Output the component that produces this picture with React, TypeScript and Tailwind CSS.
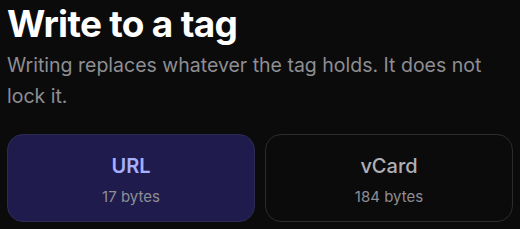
const options = [
  { label: 'URL', size: '17 bytes', active: true },
  { label: 'vCard', size: '184 bytes', active: false },
];

export default function App() {
  return (
    <div className="h-[229px] w-[520px] overflow-hidden bg-[#0b0b0c] px-[7px] font-['Inter',sans-serif]">
      <h1 className="pt-[1px] text-[37px] font-bold leading-[46px] tracking-[-0.7px] text-white">
        Write to a tag
      </h1>
      <p className="mt-[3px] text-[19.5px] leading-[31px] text-[#8e8e93]">
        Writing replaces whatever the tag holds. It does not lock it.
      </p>
      <div className="mt-[22px] grid grid-cols-2 gap-[10px]">
        {options.map((o) => (
          <button
            key={o.label}
            className={`flex h-[88px] flex-col items-center justify-center rounded-[16px] border pt-[3px] ${
              o.active ? 'border-[#2d2b52] bg-[#1f1c4d]' : 'border-[#2c2c2e] bg-[#0b0b0c]'
            }`}
          >
            <span
              className={`text-[20px] leading-[26px] ${
                o.active ? 'font-semibold text-[#a5b0ff]' : 'font-medium text-[#b0b0b4]'
              }`}
            >
              {o.label}
            </span>
            <span className="mt-[8px] text-[15px] leading-[20px] text-[#8e8e93]">{o.size}</span>
          </button>
        ))}
      </div>
    </div>
  );
}
